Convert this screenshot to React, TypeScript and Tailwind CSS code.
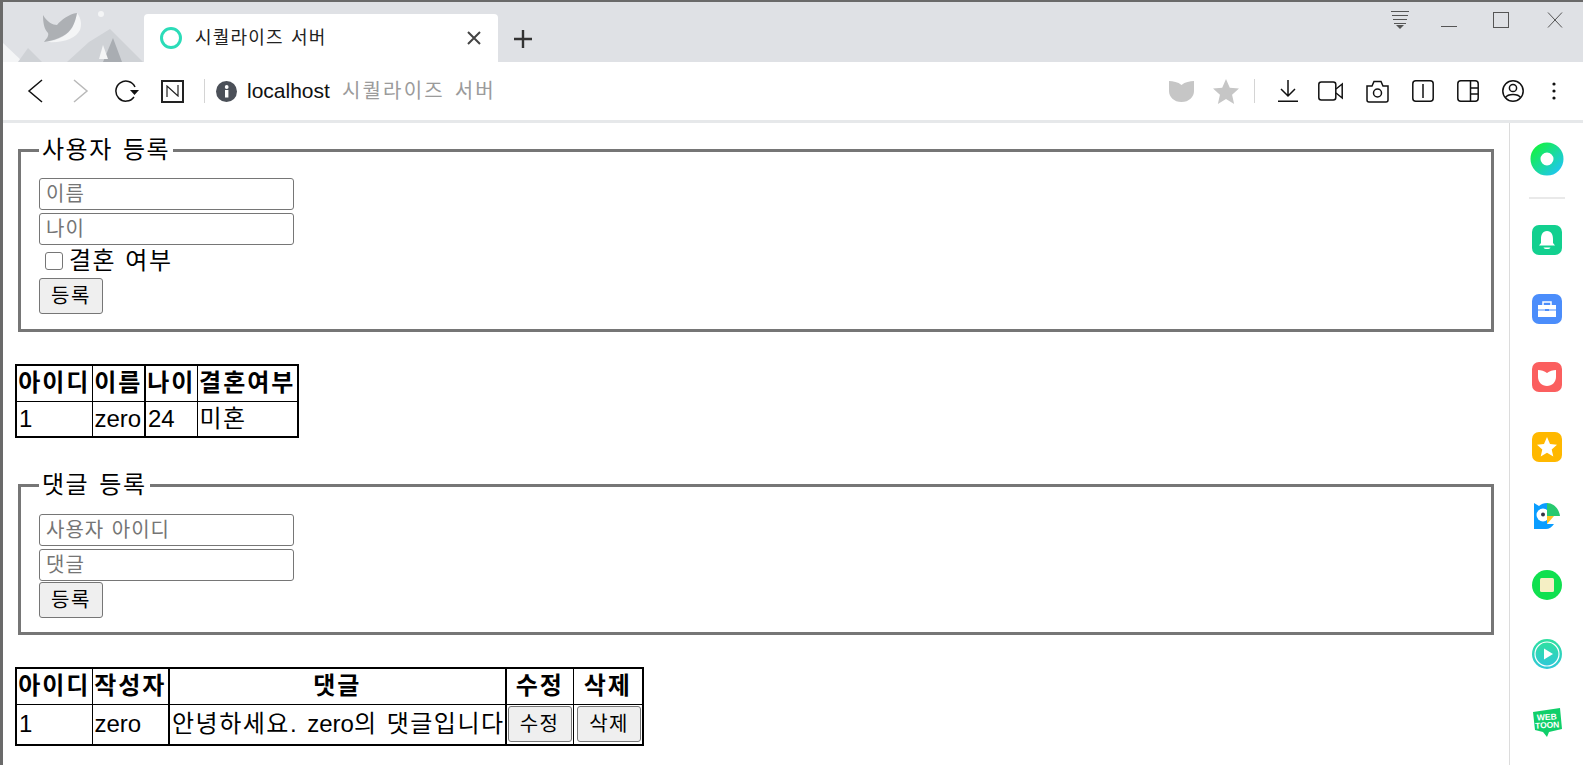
const fontStack = "font-['Liberation_Sans','Noto_Sans_CJK_KR',sans-serif]"

function WhaleArt() {
  return (
    <svg width="141" height="60" viewBox="0 0 141 60" className="shrink-0">
      <path d="M0 41 L20 60 L0 60 Z" fill="#f4f5f6" />
      <path d="M15 60 L25 46 L39 60 Z" fill="#cfd2d6" />
      <path d="M64 60 L86 40 L107 27 L140 60 Z" fill="#cfd2d6" />
      <path d="M110 36 L119 60 L100 60 Z" fill="#a9adb2" />
      <path d="M100 43 L105 57 L96 57 Z" fill="#f4f5f6" />
      <circle cx="98" cy="12" r="3" fill="#f4f5f6" />
      <path d="M74 11 C78 16 79 22 77 28 C73 36 62 41 44 40 C55 38 66 33 70 24 C72 20 73 15 74 11 Z" fill="#f4f5f6" />
      <path d="M40 13 C44 20 50 23 54 23 C58 18 66 12 74 11 C72 22 68 30 60 34 C55 37 48 39 41 40 C44 36 46 34 45 31 C41 27 40 20 40 13 Z" fill="#adb0b4" />
    </svg>
  )
}

function Tab() {
  return (
    <div className="flex h-[48px] w-[354px] shrink-0 items-center self-end rounded-t-[4px] bg-white pl-[16px] pr-[17px]">
      <span className="h-[22px] w-[22px] rounded-full border-[3px] border-[#2bdcb8]" />
      <span className="ml-[13px] text-[18px] tracking-[1.2px] text-[#222] [word-spacing:1px]">시퀄라이즈 서버</span>
      <svg width="14" height="14" viewBox="0 0 14 14" className="ml-auto" stroke="#444" strokeWidth="2" fill="none">
        <path d="M1 1 L13 13 M13 1 L1 13" />
      </svg>
    </div>
  )
}

function WindowButtons() {
  return (
    <div className="ml-auto flex items-start pr-[20px] pt-[8px]">
      <svg width="18" height="20" viewBox="0 0 18 20" fill="#555" className="mr-[32px]">
        <rect x="0" y="1" width="18" height="1" />
        <rect x="1" y="5" width="16" height="1" />
        <rect x="2" y="9" width="14" height="1" />
        <rect x="3" y="13" width="12" height="1" />
        <path d="M5 15 H13 L9 19 Z" />
      </svg>
      <svg width="16" height="20" viewBox="0 0 16 20" stroke="#555" fill="none" className="mr-[36px]">
        <path d="M0 16.5 H16" />
      </svg>
      <svg width="16" height="20" viewBox="0 0 16 20" stroke="#555" fill="none" className="mr-[38px]">
        <rect x="0.5" y="2.5" width="15" height="15" />
      </svg>
      <svg width="16" height="20" viewBox="0 0 16 20" stroke="#555" fill="none">
        <path d="M1 2.5 L15 17.5 M15 2.5 L1 17.5" />
      </svg>
    </div>
  )
}

function LeftTools() {
  return (
    <div className="flex items-center">
      <svg width="16" height="24" viewBox="0 0 16 24" fill="none" stroke="#111" strokeWidth="1.5" className="ml-[24px]">
        <path d="M15 1 L2 12 L15 23" />
      </svg>
      <svg width="16" height="24" viewBox="0 0 16 24" fill="none" stroke="#b9b9b9" strokeWidth="1.5" className="ml-[30px]">
        <path d="M1 1 L14 12 L1 23" />
      </svg>
      <svg width="24" height="22" viewBox="0 0 24 22" fill="none" className="ml-[26px]">
        <path d="M20 7 A10 10 0 1 0 19 17" stroke="#111" strokeWidth="1.5" />
        <path d="M15 10 H24 L19.5 15 Z" fill="#111" />
      </svg>
      <div className="ml-[22px] flex h-[23px] w-[23px] items-center justify-center border-2 border-[#222]">
        <svg width="13" height="12" viewBox="0 0 13 12" fill="none" stroke="#222" strokeWidth="1.2">
          <path d="M1 12 V1 L12 11 V0" />
        </svg>
      </div>
      <span className="ml-[20px] h-[24px] w-px bg-[#d4d4d4]" />
      <svg width="21" height="21" viewBox="0 0 21 21" className="ml-[11px]">
        <circle cx="10.5" cy="10.5" r="10.5" fill="#4b5058" />
        <rect x="9" y="9" width="3.4" height="7.5" fill="#fff" />
        <circle cx="10.7" cy="6" r="1.9" fill="#fff" />
      </svg>
      <span className="ml-[10px] text-[21px] text-[#111]">localhost</span>
      <span className="ml-[12px] text-[20px] tracking-[2.2px] text-[#9b9b9b] [word-spacing:2px]">시퀄라이즈 서버</span>
    </div>
  )
}

function RightTools() {
  return (
    <div className="ml-auto flex items-center pr-[27px]">
      <svg width="25" height="22" viewBox="0 0 25 22" fill="#c6c6c6">
        <path d="M0 1 C4 1 9 2 12.5 5 C16 2 21 1 25 1 V11 C25 17 20 22 12.5 22 C5 22 0 17 0 11 Z" />
      </svg>
      <svg width="26" height="25" viewBox="0 0 24 23" fill="#c6c6c6" className="ml-[19px]">
        <path d="M12 0 L15.5 8 L24 8.8 L17.6 14.5 L19.5 23 L12 18.5 L4.5 23 L6.4 14.5 L0 8.8 L8.5 8 Z" />
      </svg>
      <span className="ml-[15px] h-[24px] w-px bg-[#d4d4d4]" />
      <svg width="20" height="22" viewBox="0 0 20 22" fill="none" stroke="#111" strokeWidth="1.5" className="ml-[23px]">
        <path d="M10 0 V16 M3 9 L10 16 L17 9 M0 21.2 H20" />
      </svg>
      <svg width="25" height="20" viewBox="0 0 25 20" fill="none" stroke="#111" strokeWidth="1.5" className="ml-[20px]">
        <rect x="0.8" y="1" width="17" height="18" rx="2.5" />
        <path d="M18 8 L24.2 3 V17 L18 12" />
      </svg>
      <svg width="23" height="23" viewBox="0 0 23 23" fill="none" stroke="#111" strokeWidth="1.5" className="ml-[23px]">
        <path d="M1 6 H6 L8 1.5 H15 L17 6 H22 V20 A2 2 0 0 1 20 22 H3 A2 2 0 0 1 1 20 Z" />
        <circle cx="11.5" cy="13" r="4" />
      </svg>
      <svg width="22" height="22" viewBox="0 0 22 22" fill="none" stroke="#111" strokeWidth="1.5" className="ml-[23px]">
        <rect x="0.8" y="0.8" width="20.4" height="20.4" rx="3" />
        <path d="M11 4 V18" />
      </svg>
      <svg width="22" height="22" viewBox="0 0 22 22" fill="none" stroke="#111" strokeWidth="1.5" className="ml-[23px]">
        <rect x="0.8" y="0.8" width="20.4" height="20.4" rx="3" />
        <path d="M13.5 1 V21 M13.5 8 H21 M13.5 14 H21" />
      </svg>
      <svg width="22" height="22" viewBox="0 0 22 22" fill="none" stroke="#111" strokeWidth="1.5" className="ml-[23px]">
        <circle cx="11" cy="11" r="10.2" />
        <circle cx="11" cy="8" r="3.6" />
        <path d="M3.5 17.5 C6 13.5 16 13.5 18.5 17.5" />
      </svg>
      <svg width="4" height="18" viewBox="0 0 4 18" fill="#111" className="ml-[28px]">
        <circle cx="2" cy="2" r="1.6" />
        <circle cx="2" cy="9" r="1.6" />
        <circle cx="2" cy="16" r="1.6" />
      </svg>
    </div>
  )
}

function TextField({ placeholder }: { placeholder: string }) {
  return (
    <input
      placeholder={placeholder}
      className="h-[32px] w-[255px] rounded-[3px] border border-[#767676] bg-white px-[6px] text-[20px] tracking-[1px] outline-none [word-spacing:1px] placeholder:text-[#757575]"
    />
  )
}

function FormButton({ label }: { label: string }) {
  return (
    <button className="h-[36px] w-[64px] rounded-[3px] border border-[#767676] bg-[#efefef] text-[20px] tracking-[1.5px] text-black">
      {label}
    </button>
  )
}

function CellButton({ label }: { label: string }) {
  return (
    <button className="block h-[36px] w-[64px] rounded-[3px] border border-[#767676] bg-[#efefef] text-[20px] tracking-[1.5px]">
      {label}
    </button>
  )
}

function UserTable() {
  return (
    <table className="ml-[12px] mt-[32px] table-fixed border-collapse border-2 border-black text-[24px] leading-[30px]">
      <thead>
        <tr className="h-[36px] tracking-[2px]">
          <th className="w-[76px] border border-black p-0">아이디</th>
          <th className="w-[53px] border border-r-2 border-black p-0">이름</th>
          <th className="w-[52px] border border-black p-0">나이</th>
          <th className="w-[101px] border border-black p-0">결혼여부</th>
        </tr>
      </thead>
      <tbody>
        <tr className="h-[36px]">
          <td className="border border-black pl-[2px]">1</td>
          <td className="border border-r-2 border-black pl-[2px]">zero</td>
          <td className="border border-black pl-[2px]">24</td>
          <td className="border border-black pl-[2px] tracking-[1.5px]">미혼</td>
        </tr>
      </tbody>
    </table>
  )
}

function CommentTable() {
  return (
    <table className="ml-[12px] mt-[32px] table-fixed border-collapse border-2 border-black text-[24px] leading-[30px]">
      <thead>
        <tr className="h-[36px] tracking-[2px]">
          <th className="w-[76px] border border-black p-0">아이디</th>
          <th className="w-[77px] border border-r-2 border-black p-0">작성자</th>
          <th className="w-[334px] border border-r-2 border-black p-0">댓글</th>
          <th className="w-[68px] border border-black p-0">수정</th>
          <th className="w-[69px] border border-black p-0">삭제</th>
        </tr>
      </thead>
      <tbody>
        <tr className="h-[41px]">
          <td className="border border-black pl-[2px]">1</td>
          <td className="border border-r-2 border-black pl-[2px]">zero</td>
          <td className="whitespace-nowrap border border-r-2 border-black pl-[2px] tracking-[1.5px] [word-spacing:1px]">
            안녕하세요. <span className="tracking-normal">zero</span>의 댓글입니다
          </td>
          <td className="border border-black px-[1px]">
            <CellButton label="수정" />
          </td>
          <td className="border border-black pl-[3px]">
            <CellButton label="삭제" />
          </td>
        </tr>
      </tbody>
    </table>
  )
}

function Sidebar() {
  return (
    <aside className="flex w-[74px] shrink-0 flex-col items-center border-l border-[#dcdcdc] pt-[19px]">
      <svg width="34" height="34" viewBox="0 0 34 34">
        <defs>
          <linearGradient id="ring" x1="0" y1="0" x2="1" y2="1">
            <stop offset="0" stopColor="#14f04a" />
            <stop offset="1" stopColor="#1fc8e8" />
          </linearGradient>
        </defs>
        <circle cx="17" cy="17" r="11.5" fill="none" stroke="url(#ring)" strokeWidth="10" />
      </svg>
      <span className="mt-[21px] h-[2px] w-[36px] bg-[#e9e9e9]" />

      <svg width="30" height="30" viewBox="0 0 30 30" className="mt-[26px]">
        <rect width="30" height="30" rx="7" fill="#12d08f" />
        <path d="M15 6 C19.5 6 21 10 21 14 V18 L23 20.5 H7 L9 18 V14 C9 10 10.5 6 15 6 Z" fill="#fff" />
        <path d="M11.5 22.5 H18.5 C18 24.5 12 24.5 11.5 22.5 Z" fill="#fff" />
      </svg>
      <svg width="30" height="30" viewBox="0 0 30 30" className="mt-[39px]">
        <rect width="30" height="30" rx="7" fill="#4b8dfb" />
        <path d="M6 11 H24 V23 H6 Z" fill="#fff" />
        <path d="M11 11 V8 H19 V11" fill="none" stroke="#fff" strokeWidth="1.5" />
        <rect x="6" y="15.5" width="18" height="1" fill="#4b8dfb" />
        <rect x="13" y="15" width="4" height="2" fill="#4b8dfb" />
      </svg>
      <svg width="30" height="30" viewBox="0 0 30 30" className="mt-[38px]">
        <rect width="30" height="30" rx="7" fill="#fb5f5f" />
        <path d="M6 8 C9 8 12.5 9 15 11 C17.5 9 21 8 24 8 V15 C24 20 20 24 15 24 C10 24 6 20 6 15 Z" fill="#fff" />
      </svg>
      <svg width="30" height="30" viewBox="0 0 30 30" className="mt-[40px]">
        <rect width="30" height="30" rx="7" fill="#ffb800" />
        <path d="M15 5 L18 12 L25 12.7 L19.7 17.4 L21.3 24.5 L15 20.8 L8.7 24.5 L10.3 17.4 L5 12.7 L12 12 Z" fill="#fff" />
      </svg>

      <svg width="26" height="26" viewBox="0 0 26 26" className="mt-[41px]">
        <path d="M0 0 L5 3 C7 1 10 0 13 0 V21 H20 C18 24 15 26 12 26 H0 Z" fill="#0a9dff" />
        <circle cx="9" cy="12" r="6.5" fill="#fff" />
        <circle cx="9" cy="11.5" r="2" fill="#334" />
        <path d="M13 0 C20 0 25 6 26 13 H13 Z" fill="#27c96f" />
        <path d="M13 13 H20 L13 21 Z" fill="#ffc41f" />
      </svg>

      <svg width="30" height="30" viewBox="0 0 30 30" className="mt-[41px]">
        <circle cx="15" cy="15" r="15" fill="#10e04f" />
        <rect x="8" y="8" width="14" height="14" rx="1.5" fill="#f5efc4" />
      </svg>
      <svg width="30" height="30" viewBox="0 0 30 30" className="mt-[39px]">
        <defs>
          <linearGradient id="play" x1="0" y1="0" x2="0" y2="1">
            <stop offset="0" stopColor="#2fe0a0" />
            <stop offset="1" stopColor="#2fc8d8" />
          </linearGradient>
        </defs>
        <circle cx="15" cy="15" r="15" fill="url(#play)" />
        <circle cx="15" cy="15" r="12" fill="url(#play)" stroke="#fff" strokeWidth="1.2" />
        <path d="M12 9.5 L21 15 L12 20.5 Z" fill="#fff" />
      </svg>
      <svg width="30" height="29" viewBox="0 0 30 29" className="mt-[39px]">
        <path d="M1 4 L28 0 L30 21 L17 24 L15 29 L11 24 L3 22 Z" fill="#10cf6a" />
        <g fill="#fff" fontSize="8.5" fontWeight="700" textAnchor="middle" transform="rotate(-3 15 14)">
          <text x="15" y="12">WEB</text>
          <text x="15" y="20">TOON</text>
        </g>
      </svg>
    </aside>
  )
}

export default function App() {
  return (
    <div className={`flex h-screen flex-col overflow-hidden border-l-[3px] border-t-2 border-[#6a6a6a] bg-white text-black ${fontStack}`}>
      {/* TAB STRIP */}
      <div className="flex h-[60px] shrink-0 bg-[#dfe1e5]">
        <WhaleArt />
        <Tab />
        <svg width="18" height="18" viewBox="0 0 18 18" fill="none" stroke="#333" strokeWidth="2.4" className="ml-[16px] mt-[28px]">
          <path d="M9 0 V18 M0 9 H18" />
        </svg>
        <WindowButtons />
      </div>

      {/* TOOLBAR */}
      <div className="flex h-[58px] shrink-0 items-center bg-white">
        <LeftTools />
        <RightTools />
      </div>
      <div className="h-[3px] shrink-0 bg-[#e6e8ea]" />

      {/* PAGE */}
      <div className="flex min-h-0 flex-1">
        <main className="min-w-0 flex-1 text-[24px]">
          <fieldset className="ml-[15px] mr-[15px] mt-[9px] border-[3px] border-[#767676] px-[18px] pb-[15px]">
            <legend className="px-[3px] leading-[36px] tracking-[1.5px] [word-spacing:2px]">사용자 등록</legend>
            <div className="flex flex-col items-start gap-[3px] pt-[10px]">
              <TextField placeholder="이름" />
              <TextField placeholder="나이" />
            </div>
            <label className="flex h-[32px] items-center leading-none tracking-[1.5px] [word-spacing:1px]">
              <input type="checkbox" className="ml-[6px] mr-[6px] h-[18px] w-[18px] appearance-none rounded-[3px] border border-[#767676] bg-white" />
              결혼 여부
            </label>
            <FormButton label="등록" />
          </fieldset>

          <UserTable />

          <fieldset className="ml-[15px] mr-[15px] mt-[29px] border-[3px] border-[#767676] px-[18px] pb-[14px]">
            <legend className="px-[3px] leading-[36px] tracking-[1.5px] [word-spacing:2px]">댓글 등록</legend>
            <div className="flex flex-col items-start gap-[3px] pt-[11px]">
              <TextField placeholder="사용자 아이디" />
              <TextField placeholder="댓글" />
            </div>
            <FormButton label="등록" />
          </fieldset>

          <CommentTable />
        </main>
        <Sidebar />
      </div>
    </div>
  )
}
